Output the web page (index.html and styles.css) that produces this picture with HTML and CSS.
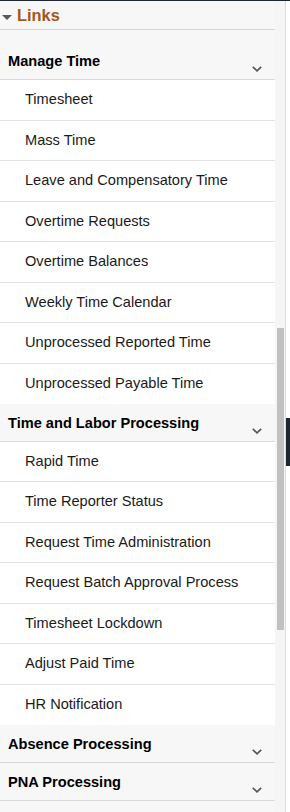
FILE: index.html
```html
<!DOCTYPE html>
<html lang="en">
<head>
  <meta charset="UTF-8" />
  <meta name="viewport" content="width=device-width, initial-scale=1" />
  <title>Links</title>
  <link rel="stylesheet" href="styles.css">
</head>
<body>
  <div class="topbar"></div>
  <div class="layout">
    <nav class="panel">
      <div class="links-title"><span class="caret"></span>Links</div>

      <div class="group group-first">
        <div class="group-head">
          <span>Manage Time</span>
          <svg class="chev" width="10" height="6" viewBox="0 0 10 6"><path d="M0.8 0.8 L5 4.8 L9.2 0.8" fill="none" stroke="#555" stroke-width="1.6"/></svg>
        </div>
        <ul class="items">
          <li>Timesheet</li>
          <li>Mass Time</li>
          <li>Leave and Compensatory Time</li>
          <li>Overtime Requests</li>
          <li>Overtime Balances</li>
          <li>Weekly Time Calendar</li>
          <li>Unprocessed Reported Time</li>
          <li>Unprocessed Payable Time</li>
        </ul>
      </div>

      <div class="group">
        <div class="group-head">
          <span>Time and Labor Processing</span>
          <svg class="chev" width="10" height="6" viewBox="0 0 10 6"><path d="M0.8 0.8 L5 4.8 L9.2 0.8" fill="none" stroke="#555" stroke-width="1.6"/></svg>
        </div>
        <ul class="items">
          <li>Rapid Time</li>
          <li>Time Reporter Status</li>
          <li>Request Time Administration</li>
          <li>Request Batch Approval Process</li>
          <li>Timesheet Lockdown</li>
          <li>Adjust Paid Time</li>
          <li>HR Notification</li>
        </ul>
      </div>

      <div class="group">
        <div class="group-head">
          <span>Absence Processing</span>
          <svg class="chev" width="10" height="6" viewBox="0 0 10 6"><path d="M0.8 0.8 L5 4.8 L9.2 0.8" fill="none" stroke="#555" stroke-width="1.6"/></svg>
        </div>
      </div>

      <div class="group">
        <div class="group-head">
          <span>PNA Processing</span>
          <svg class="chev" width="10" height="6" viewBox="0 0 10 6"><path d="M0.8 0.8 L5 4.8 L9.2 0.8" fill="none" stroke="#555" stroke-width="1.6"/></svg>
        </div>
      </div>
    </nav>

    <div class="scrolltrack"><div class="thumb"></div></div>
    <div class="edge"><div class="edge-block"></div></div>
  </div>
</body>
</html>
```

FILE: styles.css
```css
body {
  margin: 0;
  font-family: 'Liberation Sans', Arial, sans-serif;
  background: #fff;
  color: #1a1a1a;
}

.topbar {
  height: 1px;
  background: #1e2632;
}

.layout {
  display: flex;
  height: 811px;
  overflow: hidden;
}

.panel {
  width: 275px;
  flex: none;
  background: #f7f7f7;
}

.links-title {
  display: flex;
  align-items: center;
  gap: 5px;
  height: 28px;
  padding-left: 2px;
  border-bottom: 1px solid #d6d6d6;
  font-size: 16.4px;
  font-weight: bold;
  color: #a5561d;
}
.caret {
  width: 0;
  height: 0;
  margin-top: 5px;
  border-left: 5.5px solid transparent;
  border-right: 5.5px solid transparent;
  border-top: 5px solid #5a5a5a;
}

.group-first {
  margin-top: 12px;
}
.group-head {
  display: flex;
  justify-content: space-between;
  align-items: flex-start;
  height: 26px;
  padding: 11px 13px 0 8px;
  border-bottom: 1px solid #d9d9d9;
  font-size: 14.6px;
  line-height: 17px;
  font-weight: bold;
  color: #000;
}
.chev {
  margin-top: 13px;
}

.items {
  list-style: none;
  margin: 0;
  padding: 0;
  background: #fff;
}
.items li {
  height: 39.5px;
  line-height: 39.5px;
  padding-left: 25px;
  border-bottom: 1px solid #e3e3e3;
  font-size: 14.6px;
}
.items li:last-child {
  border-bottom: none;
  height: 40px;
}

/* fake scrollbar */
.scrolltrack {
  width: 10px;
  flex: none;
  background: #f5f5f5;
}
.thumb {
  width: 7px;
  height: 302px;
  margin: 327px 0 0 2px;
  background: #c1c1c1;
}

.edge {
  flex: 1;
  border-left: 1px solid #d5dce3;
  background: #fff;
}
.edge-block {
  height: 48px;
  margin-top: 417px;
  background: #1e2632;
}
```
